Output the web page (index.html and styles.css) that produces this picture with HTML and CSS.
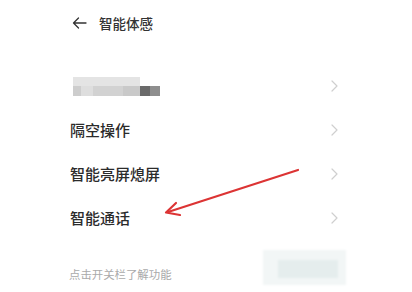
FILE: index.html
```html
<!DOCTYPE html>
<html lang="zh">
<head>
<meta charset="utf-8">
<link rel="stylesheet" href="styles.css">
</head>
<body>
<div class="page">
  <header class="topbar">
    <svg class="back" width="15" height="12" viewBox="0 0 15 12"><path d="M14 6H1.5M6.5 1L1.5 6l5 5" fill="none" stroke="#333" stroke-width="1.3" stroke-linecap="round" stroke-linejoin="round"/></svg>
    <span class="title">智能体感</span>
  </header>
  <ul class="list">
    <li class="row">
      <div class="blur">
        <div class="blur-top"></div>
        <div class="blur-bottom"></div>
      </div>
      <svg class="chev" width="7" height="12" viewBox="0 0 7 12"><path d="M1 1l5 5-5 5" fill="none" stroke="#cfcfcf" stroke-width="1.2" stroke-linecap="round" stroke-linejoin="round"/></svg>
    </li>
    <li class="row">
      <span class="label">隔空操作</span>
      <svg class="chev" width="7" height="12" viewBox="0 0 7 12"><path d="M1 1l5 5-5 5" fill="none" stroke="#cfcfcf" stroke-width="1.2" stroke-linecap="round" stroke-linejoin="round"/></svg>
    </li>
    <li class="row">
      <span class="label">智能亮屏熄屏</span>
      <svg class="chev" width="7" height="12" viewBox="0 0 7 12"><path d="M1 1l5 5-5 5" fill="none" stroke="#cfcfcf" stroke-width="1.2" stroke-linecap="round" stroke-linejoin="round"/></svg>
    </li>
    <li class="row">
      <span class="label">智能通话</span>
      <svg class="chev" width="7" height="12" viewBox="0 0 7 12"><path d="M1 1l5 5-5 5" fill="none" stroke="#cfcfcf" stroke-width="1.2" stroke-linecap="round" stroke-linejoin="round"/></svg>
    </li>
  </ul>
  <footer class="foot">
    <span class="hint">点击开关栏了解功能</span>
    <div class="fblur"><div class="fblur-in"></div></div>
  </footer>
  <svg class="annot" width="412" height="292" viewBox="0 0 412 292">
    <path d="M298 170L168 212" stroke="#dc3434" stroke-width="2.2" stroke-linecap="round" fill="none"/>
    <path d="M176 203L166 212.5L180 215" stroke="#dc3434" stroke-width="2.2" stroke-linecap="round" stroke-linejoin="round" fill="none"/>
  </svg>
</div>
</body>
</html>
```
FILE: styles.css
```css
* { box-sizing: border-box; }
html, body { margin: 0; padding: 0; background: #fff; }
body { font-family: "Noto Sans CJK SC", "Noto Sans", sans-serif; color: #333; }
.page { position: relative; width: 412px; height: 292px; overflow: hidden; }
.topbar { height: 46px; display: flex; align-items: center; padding-left: 72px; gap: 12px; }
.back { display: block; }
.title { font-size: 13.5px; line-height: 16px; color: #333; font-weight: 500; }
.list { list-style: none; margin: 18px 0 0; padding: 0 74px 0 70px; }
.row { height: 44px; display: flex; align-items: center; justify-content: space-between; }
.label { font-size: 15px; line-height: 18px; color: #2b2b2b; font-weight: 500; }
.chev { display: block; }
.blur { padding-left: 3px; display: flex; flex-direction: column; }
.blur-top { width: 67px; height: 9px; background: #e4e4e4; filter: blur(0.6px); }
.blur-bottom { width: 87px; height: 10px; filter: blur(0.6px);
  background: linear-gradient(90deg, #cdcdcd 0 8px, #dedede 8px 20px, #d2d2d2 20px 50px, #c9c9c9 50px 67px, #6a6a6a 67px 77px, #8e8e8e 77px 87px); }
.foot { display: flex; align-items: flex-start; padding: 10px 0 0 69px; gap: 91px; }
.hint { font-size: 11.4px; line-height: 14px; color: #aaa; margin-top: 17px; }
.fblur { width: 83px; height: 35px; background: #f2f6f6; padding: 10px 8px 7px 15px; filter: blur(0.8px); }
.fblur-in { width: 100%; height: 100%; background: #e5eded; }
.annot { position: absolute; left: 0; top: 0; pointer-events: none; }
```
